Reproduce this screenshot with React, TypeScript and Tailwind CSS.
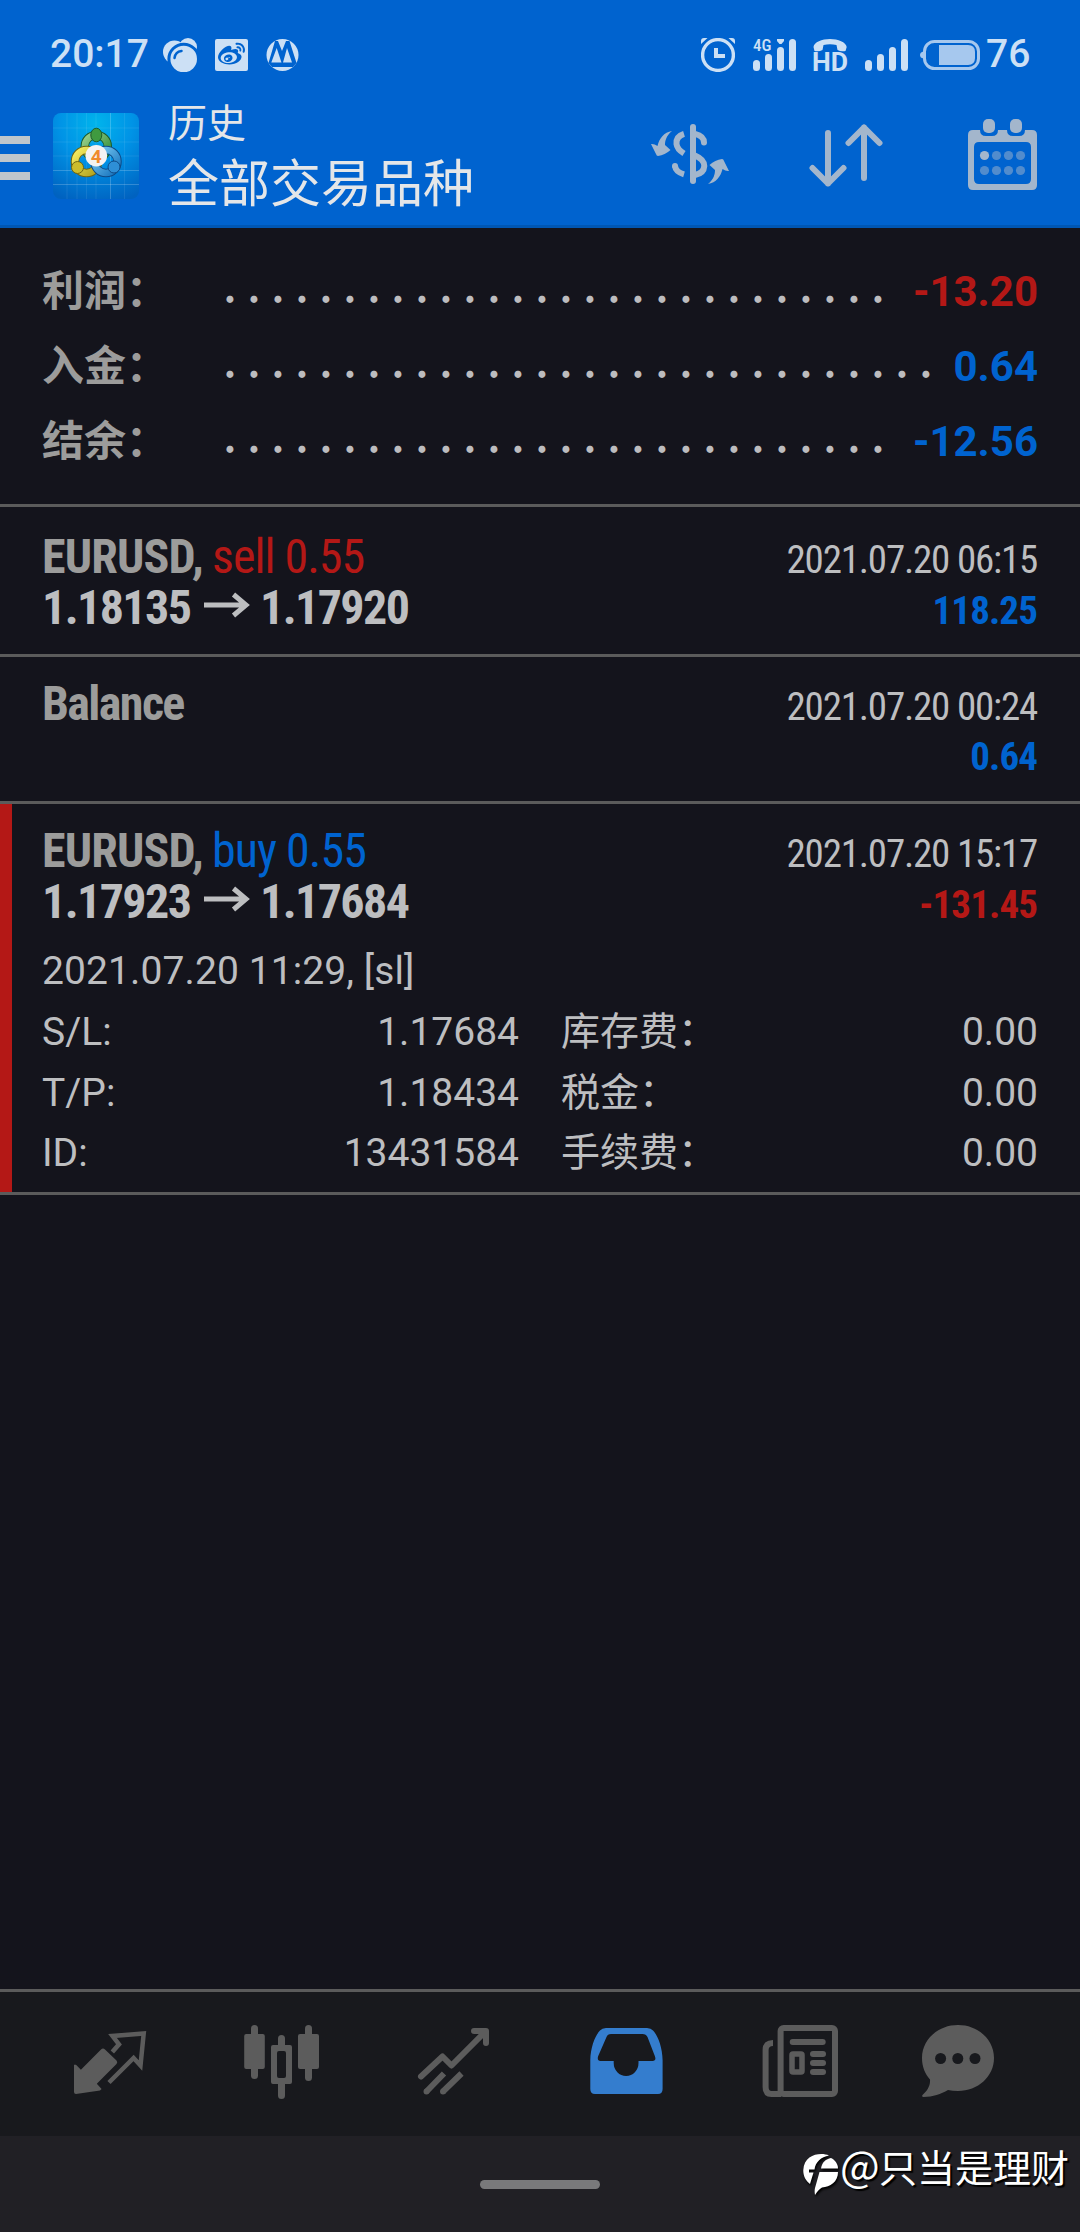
import { FaWeibo } from "react-icons/fa";

const summary = [
  { label: "利润：", dots: 28, value: "-13.20", color: "text-[#b41816]" },
  { label: "入金：", dots: 30, value: "0.64", color: "text-[#0063cf]" },
  { label: "结余：", dots: 28, value: "-12.56", color: "text-[#0063cf]" },
];

const details = [
  ["S/L:", "1.17684", "库存费：", "0.00"],
  ["T/P:", "1.18434", "税金：", "0.00"],
  ["ID:", "13431584", "手续费：", "0.00"],
];

const SignalBars = ({ network }: { network?: string }) => (
  <svg
    className="overflow-visible"
    width="43"
    height="32"
    viewBox="0 0 43 32"
    fill="#cce0f5"
  >
    <rect x="0" y="21" width="7" height="11" rx="3.5" />
    <rect x="12" y="15" width="7" height="17" rx="3.5" />
    <rect x="24" y="8" width="7" height="24" rx="3.5" />
    <rect x="36" y="0" width="7" height="32" rx="3.5" />
    {network && (
      <>
        <path d="M24 0H31V2L28.5 5H26.5L24 2Z" />
        <text
          x="0"
          y="12"
          textLength="18.5"
          lengthAdjust="spacingAndGlyphs"
          className="font-['Roboto_Condensed',sans-serif] text-[17px] font-medium"
        >
          {network}
        </text>
      </>
    )}
  </svg>
);

const StatusBar = () => (
  <div className="mt-[33px] flex h-[43px] items-center pl-[50px] font-['Roboto',sans-serif] text-[39px] leading-[43px] font-medium text-[#cce0f5]">
    <span className="w-[113px]">20:17</span>
    <svg width="34" height="34" viewBox="0 0 34 34" fill="#cce0f5">
      <circle cx="11.5" cy="14" r="11.5" />
      <circle cx="25" cy="9" r="9" />
      <circle cx="20.7" cy="21" r="14.8" stroke="#0063cf" strokeWidth="3" />
      <path
        d="M11.5 20C12 16.500 14.500 13.500 18.500 13"
        fill="none"
        stroke="#0063cf"
        strokeWidth="2.5"
        strokeLinecap="round"
      />
    </svg>
    <span className="ml-[18px] flex h-8 w-[33px] items-center justify-center rounded-[2px] bg-[#cce0f5]">
      <FaWeibo size="27px" color="#0063cf" />
    </span>
    <svg className="ml-[18px]" width="33" height="32" viewBox="0 0 33 32" fill="#cce0f5">
      <circle cx="16.5" cy="16" r="16" />
      <path d="M2.500 24L9 2H12L16 12L20 2H23.500L30.500 24L27 28H6Z" fill="#0063cf" />
      <path d="M5.300 23.500L10.700 9L15.500 23.500ZM17 23.500L21 9L26 23.500Z" />
    </svg>

    <svg className="ml-[402px]" width="34" height="34" viewBox="0 0 34 34" fill="none">
      <circle cx="17" cy="17" r="15.4" stroke="#cce0f5" strokeWidth="3.4" />
      <path d="M15 10V18H24" stroke="#cce0f5" strokeWidth="4" />
      <path d="M0 6V3Q0 0 3 0H6.500ZM34 6V3Q34 0 31 0H27.500Z" fill="#cce0f5" />
    </svg>
    <span className="ml-[18px]">
      <SignalBars network="4G" />
    </span>
    <svg
      className="ml-[17px] overflow-visible"
      width="34"
      height="32"
      viewBox="0 0 34 32"
      fill="#cce0f5"
    >
      <path d="M0.500 8C1 3 9 0 17 0S33 3 33.700 8L32.500 12Q28 13 24.500 11L23.500 6Q17 4.500 10.500 6L9.500 11Q6 13 1.500 12Z" />
      <text
        x="-1"
        y="31.5"
        textLength="36"
        lengthAdjust="spacingAndGlyphs"
        className="font-['Roboto',sans-serif] text-[25px] font-bold"
      >
        HD
      </text>
    </svg>
    <span className="ml-[18px]">
      <SignalBars />
    </span>
    <svg className="ml-3" width="60" height="30" viewBox="0 0 60 30">
      <rect
        x="4.5"
        y="1.5"
        width="54"
        height="27"
        rx="10"
        fill="none"
        stroke="#a6c8ee"
        strokeWidth="3"
      />
      <path d="M3.500 11.500Q0 12 0 15T3.500 18.500Z" fill="#a6c8ee" />
      <path d="M19 5H48Q55 5 55 12V18Q55 25 48 25H19Z" fill="#a6c8ee" />
    </svg>
    <span className="ml-1.5">76</span>
  </div>
);

const AppLogo = () => (
  <svg width="86" height="86" viewBox="0 0 86 86">
    <defs>
      <radialGradient id="tile" cx="50%" cy="12%" r="95%">
        <stop offset="0" stopColor="#00b4ec" />
        <stop offset="0.45" stopColor="#0093e6" />
        <stop offset="1" stopColor="#0062c0" />
      </radialGradient>
      <linearGradient id="green" x1="0" y1="0" x2="1" y2="1">
        <stop offset="0" stopColor="#9bd08c" />
        <stop offset="1" stopColor="#2c8a35" />
      </linearGradient>
      <linearGradient id="yellow" x1="0" y1="0" x2="1" y2="1">
        <stop offset="0" stopColor="#f6ee62" />
        <stop offset="1" stopColor="#b0a01c" />
      </linearGradient>
      <linearGradient id="blue" x1="0" y1="0" x2="1" y2="1">
        <stop offset="0" stopColor="#7cccf5" />
        <stop offset="1" stopColor="#1673bd" />
      </linearGradient>
    </defs>
    <rect width="86" height="86" rx="8" fill="url(#tile)" />
    <path
      d="M14 0V86M24 0V86M33.500 0V86M43 0V86M71.500 0V86M0 15H86M0 29H86M0 43H86"
      stroke="#fff"
      strokeOpacity="0.08"
    />
    <path d="M57.500 0V86M0 57.500H86M0 71.500H86" stroke="#fff" strokeOpacity="0.2" />
    <g fill="none">
      <circle cx="43.3" cy="33.5" r="11.5" stroke="#1c5a2a" strokeWidth="8.5" />
      <circle cx="43.3" cy="33.5" r="11.5" stroke="url(#green)" strokeWidth="6.5" />
      <circle cx="33.5" cy="48.5" r="11.5" stroke="#6e6512" strokeWidth="8.5" />
      <circle cx="33.5" cy="48.5" r="11.5" stroke="url(#yellow)" strokeWidth="6.5" />
      <circle cx="53" cy="48.5" r="11.5" stroke="#0e4a86" strokeWidth="8.5" />
      <circle cx="53" cy="48.5" r="11.5" stroke="url(#blue)" strokeWidth="6.5" />
    </g>
    <ellipse cx="43.3" cy="22" rx="5.5" ry="6.8" fill="#3f9a40" stroke="#1c5a2a" />
    <circle cx="24.5" cy="54.5" r="6" fill="#cbbd2c" stroke="#6e6512" />
    <circle cx="61" cy="54" r="6" fill="#2e8fd6" stroke="#0e4a86" />
    <circle cx="43.3" cy="42.7" r="10.8" fill="#f4f2f2" />
    <text
      x="43.3"
      y="49.5"
      textAnchor="middle"
      fill="#f08a2c"
      className="font-['Roboto',sans-serif] text-[19px] font-bold"
    >
      4
    </text>
  </svg>
);

const exchangeArrow =
  "M21 7C15 12 14 17 14 21L19.500 26Q14 31 7 32Q5.500 32 5 30L0 20Q3 19.500 6.500 22C8 15 13 8 21 7Z";

const Toolbar = () => (
  <div className="flex h-[152px] items-start border-b-[3px] border-[#0057b4]">
    <div className="mt-[60px] flex w-[30px] flex-col gap-2.5">
      <div className="h-2 bg-[#bfc6cc]" />
      <div className="h-2 bg-[#bfc6cc]" />
      <div className="h-2 bg-[#bfc6cc]" />
    </div>
    <div className="mt-[37px] ml-[23px]">
      <AppLogo />
    </div>
    <div className="mt-[18px] ml-[29px] w-[483px] font-['Noto_Sans_CJK_SC',sans-serif] text-[#e4e6e8]">
      <div className="text-[39px] leading-[52px]">历史</div>
      <div className="mt-0.5 text-[51px] leading-[64px]">全部交易品种</div>
    </div>
    <svg className="mt-12" width="78" height="60" viewBox="0 0 78 60" fill="#a3b6cc">
      <rect x="39" y="0" width="6" height="60" rx="3" />
      <g fill="none" stroke="#a3b6cc" strokeWidth="6">
        <path d="M33 9.800C27.500 11.500 25 15 25.500 20C26 24.500 29 27 33 29.500" />
        <path d="M44 9.800C49 11 53 14 53 18.500" strokeLinecap="round" />
        <path d="M44 31.500C50 34 53.300 38 53.300 42C53 47 49 50 44 51" />
        <path d="M24 42C24.500 46.500 28.500 49 33 50.300" />
      </g>
      <circle cx="24" cy="42" r="3" />
      <path d={exchangeArrow} />
      <path d={exchangeArrow} transform="rotate(180 39 33.5)" />
    </svg>
    <svg
      className="mt-12 ml-20"
      width="74"
      height="63"
      viewBox="0 0 74 63"
      fill="none"
      stroke="#a3b6cc"
      strokeWidth="6"
      strokeLinecap="round"
      strokeLinejoin="round"
    >
      <path d="M19 9V59.500M3.500 44L19 59.500L34.500 44" />
      <path d="M55 54V3.500M39.500 19L55 3.500L70.500 19" />
    </svg>
    <svg className="mt-[43px] ml-[85px]" width="69" height="71" viewBox="0 0 69 71" fill="#a3b6cc">
      <path
        fillRule="evenodd"
        d="M5 11H12Q12 17 18 17H24Q30 17 30 11H39Q39 17 45 17H51Q57 17 57 11H64Q69 11 69 16V66Q69 71 64 71H5Q0 71 0 66V16Q0 11 5 11ZM11 23Q6 23 6 28V60Q6 65 11 65H58Q63 65 63 60V28Q63 23 58 23Z"
      />
      <rect x="15" y="0" width="12" height="14" rx="5" />
      <rect x="42" y="0" width="12" height="14" rx="5" />
      {[36.5, 51.5].map((cy) =>
        [16.5, 28.5, 40.5, 52.5].map((cx) => (
          <circle
            key={`${cx}-${cy}`}
            cx={cx}
            cy={cy}
            r="4.6"
            opacity={cx === 16.5 && cy === 36.5 ? 1 : 0.5}
          />
        ))
      )}
    </svg>
  </div>
);

const Summary = () => (
  <div className="h-[279px] border-b-[3px] border-[#5b5b5b] px-[42px] pt-[22px] text-[42px] leading-[75px] font-bold">
    {summary.map((e) => (
      <div key={e.label} className="flex h-[75px] items-baseline">
        <span className="w-44 font-['Noto_Sans_CJK_SC',sans-serif] text-[#9c9c9b]">
          {e.label}
        </span>
        <span className="flex -translate-y-[3px] font-['Noto_Sans_CJK_SC',sans-serif] text-[38px] text-[#bcbcbe]">
          {Array.from({ length: e.dots }, (_, i) => (
            <span key={i} className="w-6 text-center">
              .
            </span>
          ))}
        </span>
        <span className={`ml-auto font-['Roboto',sans-serif] ${e.color}`}>
          {e.value}
        </span>
      </div>
    ))}
  </div>
);

const PriceMove = ({ from, to }: { from: string; to: string }) => (
  <div className="flex items-baseline font-bold tracking-[-1.6px] text-[#bdbec0]">
    <span className="w-[162px]">{from}</span>
    <svg
      className="mt-[10px] self-start"
      width="46"
      height="26"
      viewBox="0 0 46 26"
      fill="none"
      stroke="#bdbec0"
      strokeWidth="5"
    >
      <path d="M0 13H42M29.500 2.500L42 13L29.500 23.500" />
    </svg>
    <span className="ml-2.5">{to}</span>
  </div>
);

interface DealProps {
  title: React.ReactNode;
  time: string;
  profit: string;
  profitColor: string;
  move?: React.ReactNode;
}

const DealHead = ({ title, time, profit, profitColor, move }: DealProps) => (
  <div className="font-['Roboto_Condensed',sans-serif] text-[48px] leading-[51px]">
    <div className="flex h-[51px] items-baseline">
      {title}
      <span className="mr-[1px] ml-auto text-[39px] tracking-[-1.2px] text-[#bdbec0]">
        {time}
      </span>
    </div>
    <div className={`flex h-[51px] items-baseline ${move ? "" : "pt-[3px]"}`}>
      {move}
      <span
        className={`mr-[1px] ml-auto text-[39px] font-bold tracking-[-0.9px] ${profitColor}`}
      >
        {profit}
      </span>
    </div>
  </div>
);

const symbol = (
  <span className="w-[170px] font-bold tracking-[-0.85px] text-[#9c9c9b]">EURUSD,</span>
);

const History = () => (
  <div className="flex-1">
    <div className="h-[150px] border-b-[3px] border-[#5b5b5b] px-[42px] pt-6">
      <DealHead
        title={
          <>
            {symbol}
            <span className="tracking-[-1px] text-[#b41816]">sell 0.55</span>
          </>
        }
        time="2021.07.20 06:15"
        profit="118.25"
        profitColor="text-[#0063cf]"
        move={<PriceMove from="1.18135" to="1.17920" />}
      />
    </div>
    <div className="h-[147px] border-b-[3px] border-[#5b5b5b] px-[42px] pt-[21px]">
      <DealHead
        title={
          <span className="font-bold tracking-[-1.6px] text-[#9c9c9b]">Balance</span>
        }
        time="2021.07.20 00:24"
        profit="0.64"
        profitColor="text-[#0063cf]"
      />
    </div>
    <div className="flex h-[391px] border-b-[3px] border-[#5b5b5b]">
      <div className="w-3 bg-[#b41816]" />
      <div className="flex-1 pt-[21px] pr-[42px] pl-[30px]">
        <DealHead
          title={
            <>
              {symbol}
              <span className="tracking-[-0.95px] text-[#0063cf]">buy 0.55</span>
            </>
          }
          time="2021.07.20 15:17"
          profit="-131.45"
          profitColor="text-[#b41816]"
          move={<PriceMove from="1.17923" to="1.17684" />}
        />
        <div className="font-['Roboto',sans-serif] text-[39px] leading-[61px] text-[#bdbec0]">
          <div className="mt-3.5 h-[57px] tracking-[0.1px]">2021.07.20 11:29, [sl]</div>
          {details.map(([name, value, fee, amount]) => (
            <div key={name} className="flex h-[60.5px] items-baseline">
              <span>{name}</span>
              <span className="ml-auto">{value}</span>
              <span className="ml-[42px] w-[250px] font-['Noto_Sans_CJK_SC',sans-serif]">
                {fee}
              </span>
              <span className="w-[227px] text-right">{amount}</span>
            </div>
          ))}
        </div>
      </div>
    </div>
  </div>
);

const tabs = [
  // quotes
  <>
    <path d="M80 57.500Q82 55.500 84 57.500L95.500 68.500Q97 70.300 95.500 72L75.800 91.700L80.600 97L79 98.500L55 102Q53 102 53 100V72.700H55L59.900 77.700Z" />
    <path
      d="M91.300 60L98 52.300L91.500 44L122.700 41.500L119.500 73.500L112.600 66L88 90.500"
      fill="none"
      stroke="currentColor"
      strokeWidth="4.5"
    />
  </>,
  // charts
  <>
    <rect x="50.2" y="42" width="20.6" height="35" rx="2" />
    <rect x="57" y="33" width="7" height="54" rx="3.5" />
    <path
      fillRule="evenodd"
      d="M79 53H96Q98 53 98 55V90Q98 92 96 92H79Q77 92 77 90V55Q77 53 79 53ZM85 59Q83 59 83 61V84Q83 86 85 86H90Q92 86 92 84V61Q92 59 90 59Z"
    />
    <path d="M84 54V46.500Q84 43 87.500 43T91 46.500V54ZM84 91V103.500Q84 107 87.500 107T91 103.500V91Z" />
    <rect x="104" y="42" width="21" height="35" rx="2" />
    <rect x="111" y="33" width="7" height="56" rx="3.5" />
  </>,
  // trade
  <g fill="none" stroke="currentColor" strokeWidth="6">
    <path
      d="M54 84.500L75.500 64.500L84.500 73.500L118.500 39.500M107 39H119V51"
      strokeLinecap="round"
      strokeLinejoin="round"
    />
    <path d="M77 81.500L59.500 99.500M94.500 81.500L76 99.500" />
    <path d="M59.500 99.500V99.501M76 99.500V99.501" strokeLinecap="round" />
  </g>,
  // history
  <path
    fillRule="evenodd"
    d="M50.300 68C50.500 55 55.500 43 60 38.500Q62 36 66 36H107Q111 36 113 38.500C117.500 43 122.500 55 122.600 68V97Q122.600 102 118 102H55Q50.300 102 50.300 97ZM71 42Q67.500 42 66.500 45L58 64.500Q57 69 60.500 69H73.700V71A12.400 13 0 0 0 98.500 71V69H112.500Q116.500 69 115 64.500L107.500 45Q106 42 102.500 42Z"
  />,
  // news
  <>
    <g fill="none" stroke="currentColor" strokeWidth="6">
      <rect x="67.6" y="36" width="54.4" height="66" rx="3" />
      <path d="M60 51Q52.600 51 52.600 58V95Q52.600 102 58.500 102H68" />
      <rect x="79" y="62" width="10" height="18" rx="1" strokeWidth="5.5" />
    </g>
    <rect x="76.7" y="47" width="36" height="6" rx="3" />
    <rect x="97" y="59" width="16" height="6" rx="3" />
    <rect x="97" y="68" width="16" height="6" rx="3" />
    <rect x="97" y="77" width="16" height="6" rx="3" />
  </>,
  // chat
  <>
    <path d="M72 33C92 33 108 47.500 108 66S92 99 72 99Q66.500 99 62 98C55 102 47 105 37.500 105Q35.500 104.500 36.500 103C41 99 44.500 94 44 87.500C39 82 36 74.500 36 66C36 47.500 52 33 72 33Z" />
    <g fill="#18191d">
      <circle cx="54.6" cy="66.5" r="5.5" />
      <circle cx="71.8" cy="66.5" r="5.5" />
      <circle cx="89" cy="66.5" r="5.5" />
    </g>
  </>,
];

const TabBar = () => (
  <div className="flex h-[147px] border-t-[3px] border-[#5b5b5b] bg-[#18191d] pl-[21px]">
    {tabs.map((icon, i) => (
      <button key={i} className={i === 3 ? "text-[#347dce]" : "text-[#5c5c5c]"}>
        <svg width="173" height="144" viewBox="0 0 173 144" fill="currentColor">
          {icon}
        </svg>
      </button>
    ))}
  </div>
);

const Watermark = () => (
  <div className="absolute top-0 right-[11px] flex items-baseline font-['Noto_Sans_CJK_SC',sans-serif] leading-[56px] text-white [text-shadow:2px_2px_1px_#000]">
    <svg
      className="mt-[17px] self-start drop-shadow-[1px_2px_1px_#000]"
      width="36"
      height="43"
      viewBox="0 0 36 43"
      fill="#fff"
    >
      <path d="M26 2.500C18 -1 1 1 0.300 17C0 23 3 28 7 31L10.500 19.500H6V16.500H11.500C12.500 9 18 4 26 2.500Z" />
      <path d="M28 5C23 6 19 9 18 15.500H35C35 11 32 7 28 5Z" />
      <path d="M16.500 19H35C35 29 27 34 19 34.500C16 36 14 39 12 42C11.500 39 11.500 37 12 35Z" />
    </svg>
    <span className="ml-[1px] w-[39px] text-[42px]">@</span>
    <span className="text-[38px]">只当是理财</span>
  </div>
);

export default function App() {
  return (
    <div className="flex h-[2232px] w-[1080px] flex-col overflow-hidden bg-[#14141c]">
      <div className="flex h-[228px] flex-col bg-[#0063cf]">
        <StatusBar />
        <Toolbar />
      </div>
      <Summary />
      <History />
      <TabBar />
      <div className="relative flex h-24 justify-center bg-[#212025]">
        <div className="mt-11 h-[9px] w-[120px] rounded-full bg-[#79797b]" />
        <Watermark />
      </div>
    </div>
  );
}
